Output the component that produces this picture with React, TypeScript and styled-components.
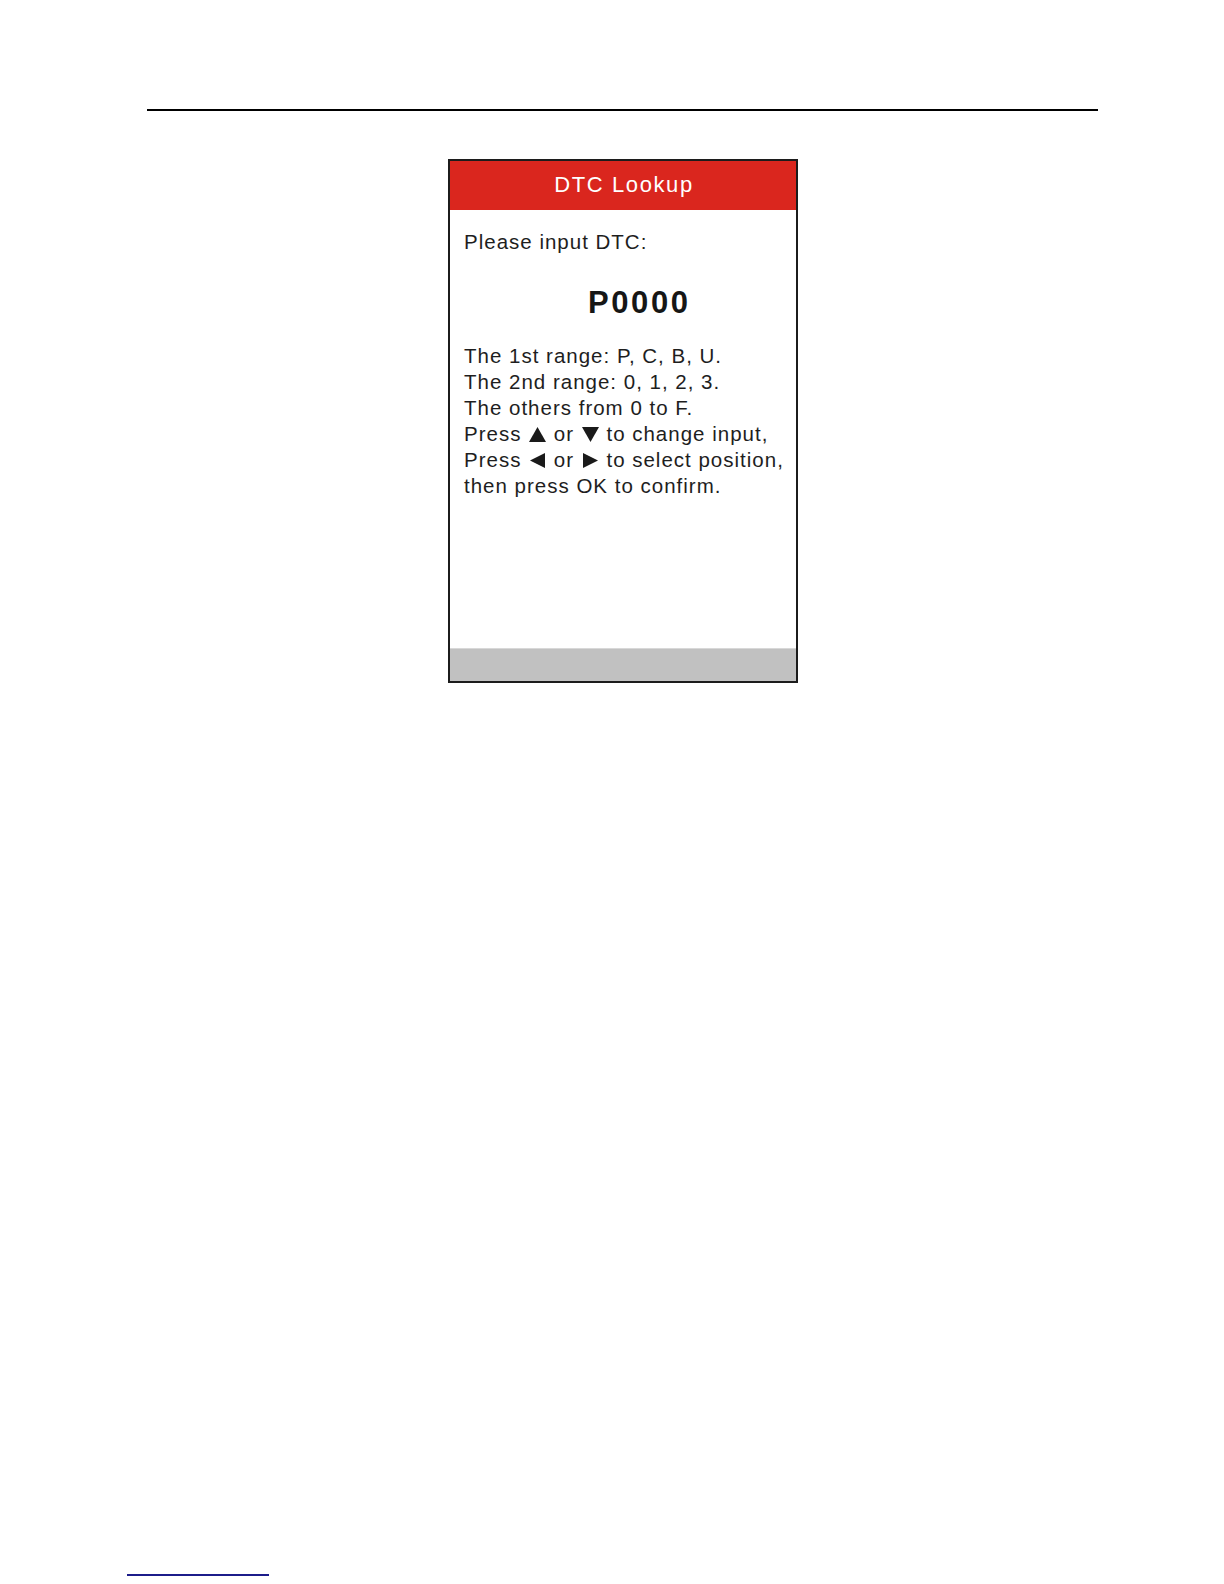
import React from "react";
import styled, { createGlobalStyle } from "styled-components";

const Global = createGlobalStyle`
  html, body { margin: 0; padding: 0; background: #ffffff; }
  body { font-family: "Liberation Sans", Arial, sans-serif; }
`;

const Page = styled.div`
  width: 1224px;
  height: 1584px;
  position: relative;
  padding-top: 109px;
  box-sizing: border-box;
  display: flex;
  flex-direction: column;
`;

const TopRule = styled.div`
  margin-left: 147px;
  width: 951px;
  height: 2px;
  background: #000;
`;

const Screen = styled.div`
  margin-top: 48px;
  margin-left: 448px;
  width: 350px;
  height: 524px;
  box-sizing: border-box;
  border: 2px solid #1c1c1c;
  background: #fff;
  display: flex;
  flex-direction: column;
`;

const Header = styled.div`
  height: 49px;
  background: #da261e;
  color: #fff;
  font-size: 22px;
  letter-spacing: 1.6px;
  display: flex;
  align-items: center;
  justify-content: center;
  padding: 0 0 2px 2px;
  box-sizing: border-box;
`;

const Body = styled.div`
  flex: 1;
  padding: 19px 0 0 14px;
  color: #1e1e1e;
  font-size: 20.5px;
  letter-spacing: 1px;
  line-height: 26px;
`;

const Prompt = styled.div``;

const Code = styled.div`
  margin-top: 30px;
  font-size: 31px;
  line-height: 36px;
  font-weight: bold;
  letter-spacing: 2.6px;
  padding-left: 124px;
  color: #161616;
`;

const Lines = styled.div`
  margin-top: 22px;
  white-space: nowrap;
`;

const Footer = styled.div`
  height: 32px;
  background: #c1c1c1;
  border-top: 1px solid #d8d8d8;
`;

const BottomLink = styled.div`
  position: absolute;
  left: 127px;
  top: 1574px;
  width: 142px;
  height: 2px;
  background: #1c1c8a;
`;

const Tri = styled.svg`
  width: 17px;
  height: 15px;
  vertical-align: -1px;
  margin: 0 1px;
`;

const Arrow = ({ dir }: { dir: "up" | "down" | "left" | "right" }) => {
  const pts = {
    up: "8.5,0 17,15 0,15",
    down: "0,0 17,0 8.5,15",
    left: "16,0 16,15 1,7.5",
    right: "1,0 1,15 16,7.5",
  }[dir];
  return (
    <Tri viewBox="0 0 17 15">
      <polygon points={pts} fill="#1a1a1a" />
    </Tri>
  );
};

export default function App() {
  return (
    <>
      <Global />
      <Page>
        <TopRule />
        <Screen>
          <Header>DTC Lookup</Header>
          <Body>
            <Prompt>Please input DTC:</Prompt>
            <Code>P0000</Code>
            <Lines>
              <div>The 1st range: P, C, B, U.</div>
              <div>The 2nd range: 0, 1, 2, 3.</div>
              <div>The others from 0 to F.</div>
              <div>
                Press <Arrow dir="up" /> or <Arrow dir="down" /> to change input,
              </div>
              <div>
                Press <Arrow dir="left" /> or <Arrow dir="right" /> to select position,
              </div>
              <div>then press OK to confirm.</div>
            </Lines>
          </Body>
          <Footer />
        </Screen>
        <BottomLink />
      </Page>
    </>
  );
}
